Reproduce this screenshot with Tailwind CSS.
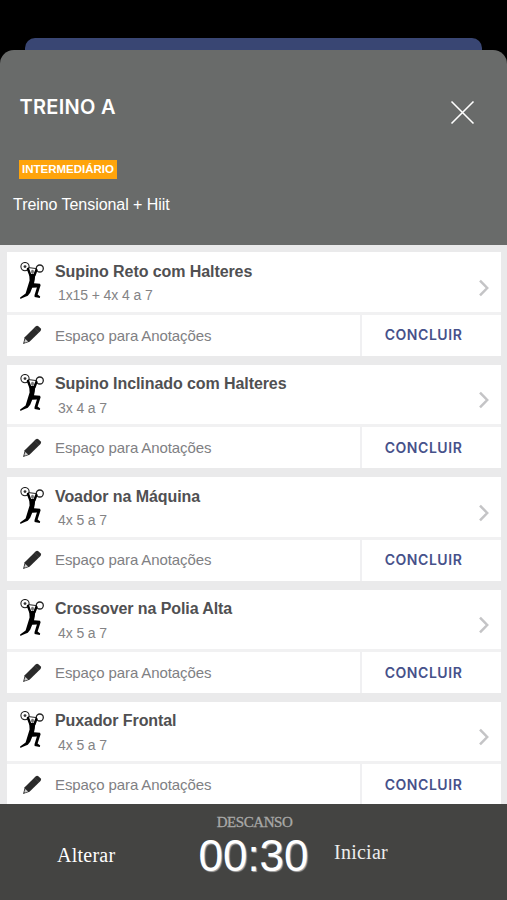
<!DOCTYPE html>
<html lang="pt-BR">
<head>
<meta charset="utf-8">
<title>Treino A</title>
<script src="https://cdn.jsdelivr.net/npm/@tailwindcss/browser@4"></script>
</head>
<body class="bg-black">
<svg class="hidden">
  <symbol id="lifter" viewBox="0 0 24 38">
    <g fill="none" stroke="#222">
      <circle cx="5" cy="4.6" r="4.1" stroke-width="1.1"/>
      <circle cx="19.8" cy="6.5" r="3.5" stroke-width="1.3"/>
      <path d="M8.5 5.6 16.6 6.6" stroke-width="1"/>
      <path d="M8 7 10.3 13.2M16.4 8 14.4 13.2" stroke="#000" stroke-width="2.4" stroke-linecap="round"/>
    </g>
    <circle cx="5" cy="4.6" r="1.4" fill="#333"/>
    <ellipse cx="12.5" cy="9.8" rx="1.5" ry="2.1" fill="#777"/>
    <path fill="#000" d="M9.2 12 15.3 12 14.8 17.5 14 21.2 20 21.7 20.6 23.2 17.6 32.6 20.2 34.6 19.8 35.9 14.6 34.9 14.5 33.3 16.9 25.4 12.2 25.8 10.2 30.8 7.8 33.8 2.4 35.9.4 36.9.1 35.4 5.6 31.6 7.6 25 9.6 18.5Z"/>
  </symbol>
  <symbol id="pencil" viewBox="0 0 20 20">
    <path fill="#2a2a2a" d="M13.6 1.5Q15 .3 16.4 1.3L18.5 3.2Q19.8 4.5 18.5 5.9L7.5 16.8 1.1 19.1 2.7 12.3Z"/>
    <path fill="#ccc" d="M3.3 14 6.1 16.4 2.9 17.7 2.3 17.1Z"/>
    <path d="M12.6 3 16.9 7.2" stroke="#555" stroke-width=".5"/>
  </symbol>
  <symbol id="chevron" viewBox="0 0 12 18">
    <path d="M2 1.6 9.2 9 2 16.4" fill="none" stroke="#c4c4c6" stroke-width="2.5"/>
  </symbol>
</svg>
<main class="flex h-[900px] w-[507px] flex-col overflow-hidden bg-black font-['Liberation_Sans',Arial,sans-serif]">
  <div class="flex h-[50px] shrink-0 items-end px-[25px]"><div class="h-[12px] w-[457px] rounded-t-[10px] bg-[#394673]"></div></div>
  <header class="flex h-[195px] shrink-0 flex-col rounded-t-[14px] bg-[#696b6a] text-white">
    <div class="flex h-[110px] items-start justify-between pt-[44px] pr-[32px] pl-[19.5px]">
      <h1 class="font-['Inter',sans-serif] text-[20px] leading-[26px] font-semibold tracking-[0.3px]">TREINO A</h1>
      <svg class="mt-[6px] size-[25px]" viewBox="0 0 25 25" fill="none" stroke="#fff" stroke-width="1.6"><path d="M1.5 1.5 23.5 23.5M23.5 1.5 1.5 23.5"/></svg>
    </div>
    <div class="ml-[19px] flex h-[19px] w-[98px] items-center justify-center bg-[#ffa40b] text-[11.5px] font-bold whitespace-nowrap"><span class="mt-px">INTERMEDIÁRIO</span></div>
    <p class="mt-[16px] ml-[13px] text-[16px] leading-[20px] tracking-[-0.05px]">Treino Tensional + Hiit</p>
  </header>
  <section id="list" class="h-[559px] shrink-0 overflow-hidden bg-[#eaeaeb] pt-[7.4px] pr-[6px] pl-[7px]"></section>
  <footer class="flex h-[96px] shrink-0 bg-[#444442] font-['Liberation_Serif',serif] text-white">
    <div class="w-[198px] pt-[37px] pl-[57px] text-[20px] leading-[28px] tracking-[0.25px]">Alterar</div>
    <div class="flex w-[111px] flex-col items-center">
      <div class="mt-[9px] ml-[2px] text-[15px] leading-[18px] tracking-[-0.45px] text-[#a9a9a8] [-webkit-text-stroke:0.3px_#a9a9a8]">DESCANSO</div>
      <div class="mt-px font-['Liberation_Sans',Arial,sans-serif] text-[44px] leading-[48px] [text-shadow:1px_1px_1px_#aaa]">00:30</div>
    </div>
    <div class="pt-[34px] pl-[25px] text-[20px] leading-[28px] tracking-[0.25px] text-[#ededed]">Iniciar</div>
  </footer>
</main>
<template id="card">
  <article class="mb-[9px] h-[103.4px] bg-white">
    <div class="flex h-[59.5px] pt-[8.5px] pl-[13px]">
      <svg class="mt-px h-[38px] w-[24px]"><use href="#lifter"/></svg>
      <div class="ml-[11px] flex-1">
        <h2 class="mt-px text-[16px] leading-[20px] font-bold tracking-[-0.08px] whitespace-nowrap text-[#505052]"></h2>
        <p class="mt-[5.5px] ml-[3px] text-[14px] leading-[17px] tracking-[-0.1px] text-[#838385]"></p>
      </div>
      <svg class="mt-[18px] mr-[11px] h-[18px] w-[12px]"><use href="#chevron"/></svg>
    </div>
    <div class="h-[3px] bg-[#f1f1f2]"></div>
    <div class="flex h-[40.9px]">
      <div class="flex w-[353px] items-center pl-[15px]">
        <svg class="size-[20px]"><use href="#pencil"/></svg>
        <span class="mt-px ml-[13px] text-[15px] tracking-[-0.1px] text-[#808083]">Espaço para Anotações</span>
      </div>
      <div class="w-[2px] bg-[#f0f0f2]"></div>
      <button class="flex-1 pr-[16px] pb-px font-['Inter',sans-serif] text-[14px] font-semibold tracking-[0.55px] text-[#46518a]">CONCLUIR</button>
    </div>
  </article>
</template>
<script>
const exercises = [
  ['Supino Reto com Halteres', '1x15 + 4x 4 a 7'],
  ['Supino Inclinado com Halteres', '3x 4 a 7'],
  ['Voador na Máquina', '4x 5 a 7'],
  ['Crossover na Polia Alta', '4x 5 a 7'],
  ['Puxador Frontal', '4x 5 a 7']
];
for (const [name, sets] of exercises) {
  const card = document.getElementById('card').content.cloneNode(true);
  card.querySelector('h2').textContent = name;
  card.querySelector('p').textContent = sets;
  document.getElementById('list').append(card);
}
</script>
</body>
</html>
